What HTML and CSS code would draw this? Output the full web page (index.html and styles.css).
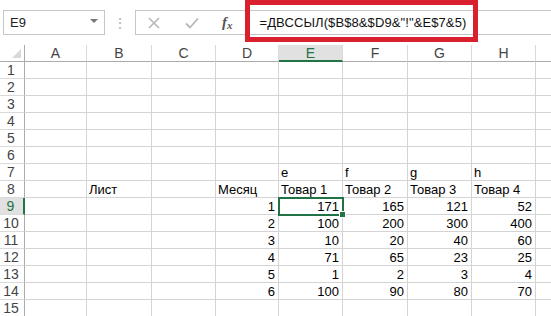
FILE: index.html
```html
<!DOCTYPE html>
<html lang="ru">
<head>
  <meta charset="UTF-8" />
  <title>ДВССЫЛ</title>
  <link rel="stylesheet" href="styles.css">
</head>
<body>
  <div class="topbar">
    <div class="namebox">
      <span>E9</span>
      <span class="arrow"></span>
    </div>
    <div class="dots">⋮</div>
    <div class="formula">
      <span class="ficon cancel">
        <svg width="12" height="12" viewBox="0 0 12 12"><path d="M1 1L11 11M11 1L1 11" stroke="#b8b8b8" stroke-width="1.6" fill="none"/></svg>
      </span>
      <span class="ficon ok">
        <svg width="14" height="12" viewBox="0 0 14 12"><path d="M1 6.5L5 10.5L13 1.5" stroke="#b8b8b8" stroke-width="1.8" fill="none"/></svg>
      </span>
      <span class="ficon fx"><i>f</i><i class="x">x</i></span>
      <span class="ftext">=ДВССЫЛ($B$8&amp;$D9&amp;"!"&amp;E$7&amp;5)</span>
    </div>
    <div class="highlight"></div>
  </div>

  <div class="sheet" id="sheet"></div>

  <script>
    const cols = ["A", "B", "C", "D", "E", "F", "G", "H", ""];
    const data = {
      7: { E: "e", F: "f", G: "g", H: "h" },
      8: { B: "Лист", D: "Месяц", E: "Товар 1", F: "Товар 2", G: "Товар 3", H: "Товар 4" },
      9: { D: 1, E: 171, F: 165, G: 121, H: 52 },
      10: { D: 2, E: 100, F: 200, G: 300, H: 400 },
      11: { D: 3, E: 10, F: 20, G: 40, H: 60 },
      12: { D: 4, E: 71, F: 65, G: 23, H: 25 },
      13: { D: 5, E: 1, F: 2, G: 3, H: 4 },
      14: { D: 6, E: 100, F: 90, G: 80, H: 70 }
    };

    const sheet = document.getElementById("sheet");
    let html = '<div class="corner"></div>';
    for (const c of cols) {
      html += `<div class="colhead${c === "E" ? " sel" : ""}">${c}</div>`;
    }
    for (let r = 1; r <= 15; r++) {
      html += `<div class="rowhead${r === 9 ? " sel" : ""}">${r}</div>`;
      for (const c of cols) {
        const v = (data[r] || {})[c];
        let cls = "cell";
        if (typeof v === "number") cls += " num";
        if (r === 9 && c === "E") cls += " active";
        html += `<div class="${cls}">${v === undefined ? "" : v}</div>`;
      }
    }
    sheet.innerHTML = html;
  </script>
</body>
</html>
```

FILE: styles.css
```css
body {
  margin: 0;
  width: 551px;
  height: 316px;
  overflow: hidden;
  background: #fff;
  font-family: "Liberation Sans", Arial, sans-serif;
  color: #000;
}
.topbar {
  position: relative;
  display: flex;
  align-items: center;
  height: 45px;
  padding-left: 3px;
}
.namebox {
  display: flex;
  align-items: center;
  justify-content: space-between;
  box-sizing: border-box;
  width: 102px;
  height: 25px;
  border: 1px solid #c6c6c6;
  padding: 0 6px 0 6px;
  font-size: 13px;
  color: #222;
}
.arrow {
  width: 0;
  height: 0;
  border-left: 4px solid transparent;
  border-right: 4px solid transparent;
  border-top: 4px solid #777;
  margin-top: -3px;
}
.dots {
  width: 30px;
  text-align: center;
  color: #b0b0b0;
  font-size: 14px;
}
.formula {
  flex: 1;
  display: flex;
  align-items: center;
  box-sizing: border-box;
  height: 25px;
  border: 1px solid #c6c6c6;
  border-right: none;
}
.ficon {
  display: flex;
  align-items: center;
  justify-content: center;
}
.cancel {
  margin-left: 12px;
  width: 12px;
}
.ok {
  margin-left: 25px;
  width: 14px;
}
.fx {
  margin-left: 23px;
  font-family: "Liberation Serif", serif;
  font-size: 15px;
  font-weight: bold;
  color: #555;
}
.fx .x {
  font-size: 11px;
  margin-top: 4px;
}
.ftext {
  margin-left: 27px;
  font-size: 13px;
  color: #111;
  letter-spacing: 0.1px;
}
.highlight {
  position: absolute;
  left: 245px;
  top: 0;
  width: 233px;
  height: 42px;
  box-sizing: border-box;
  border: 5px solid #d8202f;
}
.sheet {
  display: grid;
  grid-template-columns: 25px 62px 65px 64px 63px 64px 65px 64px 64px 40px;
  grid-template-rows: 17px;
  grid-auto-rows: 17px;
  font-size: 13px;
}
.corner {
  position: relative;
  border-right: 1px solid #ababab;
  border-bottom: 1px solid #ababab;
}
.corner::after {
  content: "";
  position: absolute;
  right: 3px;
  bottom: 3px;
  width: 0;
  height: 0;
  border-left: 9px solid transparent;
  border-bottom: 9px solid #d9d9d9;
}
.colhead, .rowhead {
  box-sizing: border-box;
  color: #444;
  display: flex;
  align-items: center;
  justify-content: center;
  font-size: 14px;
}
.colhead {
  border-right: 1px solid #dadada;
  border-bottom: 1px solid #ababab;
}
.colhead.sel {
  background: #e1e1e1;
  color: #217346;
  border-bottom: 2px solid #217346;
}
.rowhead {
  border-right: 1px solid #ababab;
  border-bottom: 1px solid #dadada;
  padding-right: 2px;
}
.rowhead.sel {
  background: #e1e1e1;
  color: #217346;
  border-right: 2px solid #217346;
}
.cell {
  box-sizing: border-box;
  border-right: 1px solid #d4d4d4;
  border-bottom: 1px solid #d4d4d4;
  padding: 1px 2px 0;
  white-space: nowrap;
  line-height: 15px;
}
.cell.num {
  text-align: right;
  padding-right: 3px;
}
.cell.active {
  position: relative;
  outline: 2px solid #217346;
  outline-offset: -1px;
}
.cell.active::after {
  content: "";
  position: absolute;
  right: -4px;
  bottom: -4px;
  width: 5px;
  height: 5px;
  background: #217346;
  border: 1px solid #fff;
}
```
